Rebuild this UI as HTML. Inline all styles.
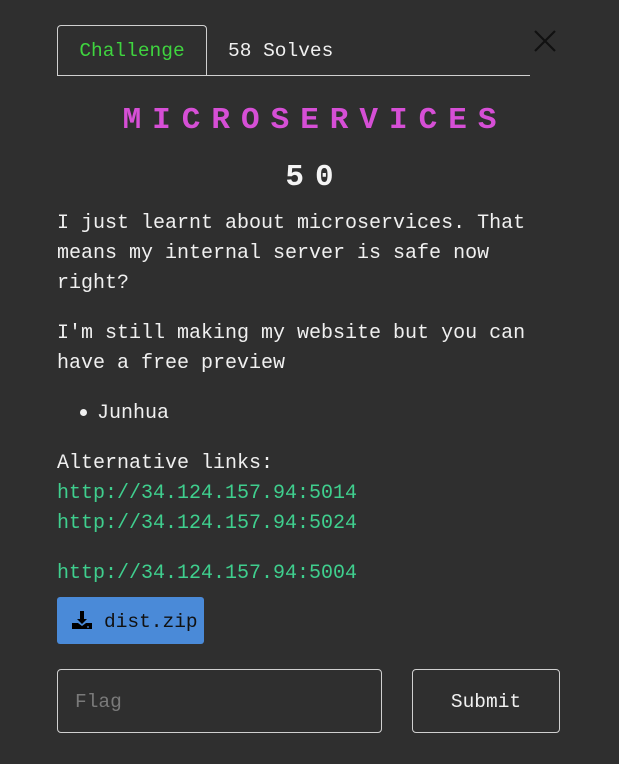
<!DOCTYPE html>
<html><head><meta charset="utf-8"><style>
body{margin:0;width:619px;height:764px;background:#2f2f2f;overflow:hidden;font-family:"Liberation Mono",monospace;color:#f0f0f0;position:relative}
.a{position:absolute;white-space:pre;font-size:20px;line-height:30px}
.g{color:#3fcf8e}
.tab{position:absolute;left:57px;top:25px;width:148px;height:50px;border:1px solid #d0d0d0;border-bottom:none;border-radius:4px 4px 0 0;color:#3fd43f;font-size:19.5px;line-height:50px;text-align:center}
.line{position:absolute;left:57px;top:75px;width:473px;height:1px;background:#d0d0d0}
.title{position:absolute;left:0;width:619px;text-align:center;font-weight:bold;font-size:31px;letter-spacing:11px;text-indent:11px}
</style></head><body>
<div class="tab">Challenge</div>
<div class="a" style="left:228px;top:36px;font-size:19.5px">58 Solves</div>
<div class="line"></div>
<svg style="position:absolute;left:533px;top:29px" width="24" height="24" viewBox="0 0 24 24"><path d="M2 2L22 22M22 2L2 22" stroke="#111" stroke-width="2.2"/></svg>
<div class="title" style="top:103px;color:#d64fd6">MICROSERVICES</div>
<div class="title" style="top:160px;color:#f4f4f4">50</div>
<div class="a" style="left:57px;top:209px">I just learnt about microservices. That
means my internal server is safe now
right?</div>
<div class="a" style="left:57px;top:319px">I'm still making my website but you can
have a free preview</div>
<div style="position:absolute;left:80px;top:409px;width:7px;height:7px;border-radius:50%;background:#f0f0f0"></div>
<div class="a" style="left:97px;top:399px">Junhua</div>
<div class="a" style="left:57px;top:449px">Alternative links:</div>
<div class="a g" style="left:57px;top:479px">http://34.124.157.94:5014
http://34.124.157.94:5024</div>
<div class="a g" style="left:57px;top:559px">http://34.124.157.94:5004</div>
<div style="position:absolute;left:57px;top:597px;width:147px;height:47px;background:#4a8ad8;border-radius:3px"></div>
<svg style="position:absolute;left:72px;top:610px" width="20" height="20" viewBox="0 0 20 20"><path d="M8 1h4v8h3l-5 5-5-5h3z" fill="#000"/><path d="M0 13h6l4 3 4-3h6v6H0z" fill="#000"/><circle cx="16" cy="17" r="0.9" fill="#4a8ad8"/></svg>
<div class="a" style="left:104px;top:607px;color:#111;font-size:19.5px">dist.zip</div>
<div style="position:absolute;left:57px;top:669px;width:323px;height:62px;border:1px solid #d0d0d0;border-radius:4px"></div>
<div class="a" style="left:75px;top:687px;color:#7a7a7a;font-size:19.5px">Flag</div>
<div style="position:absolute;left:412px;top:669px;width:146px;height:62px;border:1px solid #d0d0d0;border-radius:4px;text-align:center;line-height:64px;font-size:19.5px">Submit</div>
</body></html>
